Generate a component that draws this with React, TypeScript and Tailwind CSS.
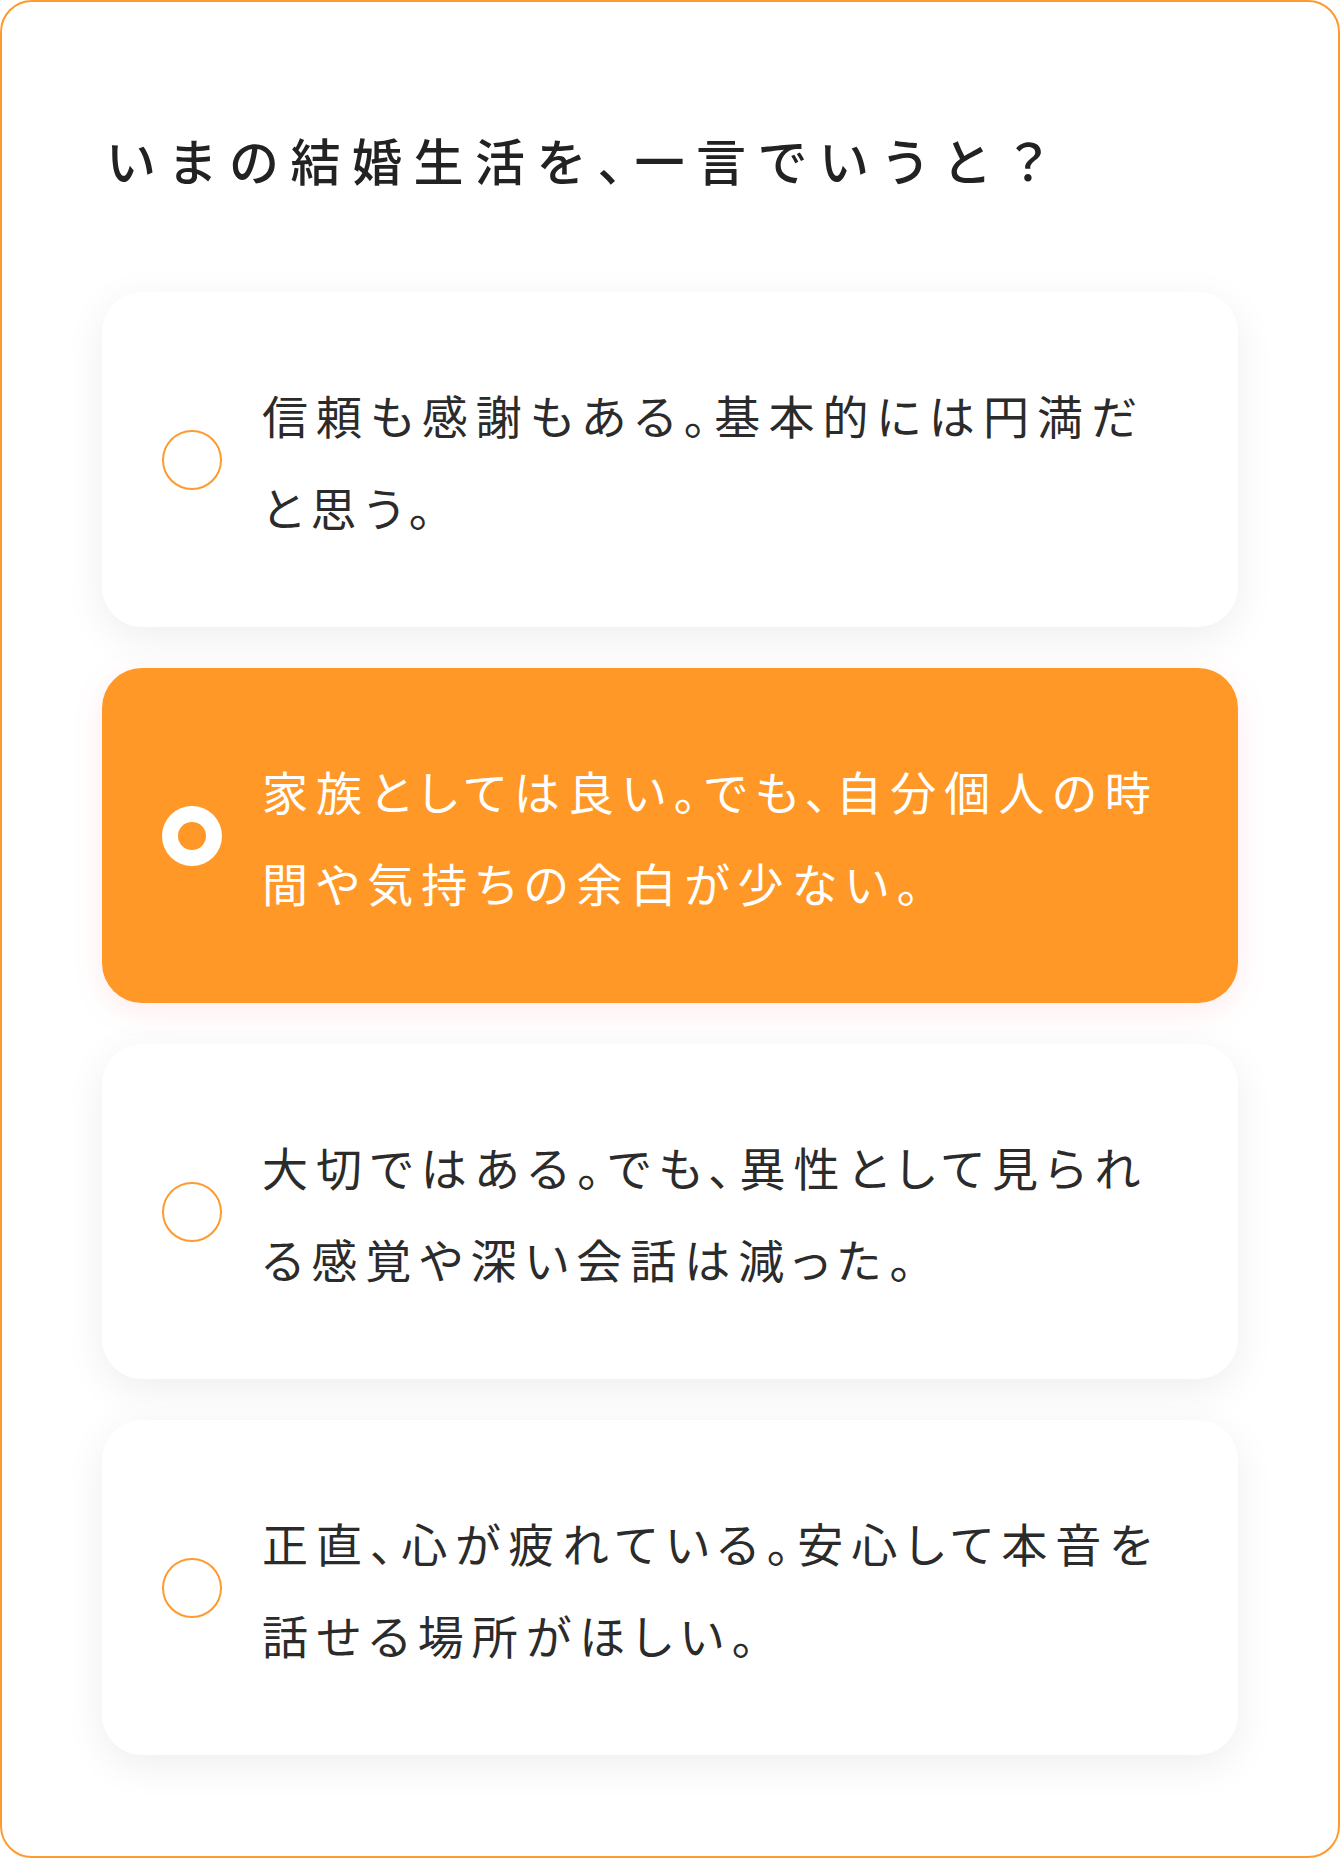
import { useState } from "react";

const OPTIONS = [
  "信頼も感謝もある。基本的には円満だと思う。",
  "家族としては良い。でも、自分個人の時間や気持ちの余白が少ない。",
  "大切ではある。でも、異性として見られる感覚や深い会話は減った。",
  "正直、心が疲れている。安心して本音を話せる場所がほしい。",
];

const FONT = "font-['Noto_Sans_CJK_JP','Noto_Sans',sans-serif]";

function Radio({ checked }: { checked: boolean }) {
  return checked ? (
    <span className="flex h-[60px] w-[60px] shrink-0 items-center justify-center rounded-full bg-white">
      <span className="h-[28px] w-[28px] rounded-full bg-[#FF9826]" />
    </span>
  ) : (
    <span className="h-[60px] w-[60px] shrink-0 rounded-full border-2 border-[#FF9A2E] bg-white" />
  );
}

export default function App() {
  const [selected, setSelected] = useState(1);

  return (
    <div className={`${FONT} bg-white`}>
      <div className="box-border flex h-[1858px] w-[1340px] flex-col rounded-[32px] border-2 border-[#FF9A2E] bg-white px-[100px] pt-[118px]">
        <h1 className="ml-[4px] text-[50px] font-medium leading-[78px] tracking-[0.23em] text-[#222]">
          いまの結婚生活を
          {/* half-width comma */}
          <span className="[font-feature-settings:'palt']">、</span>
          一言でいうと？
        </h1>

        <div className="mt-[94px] flex flex-col gap-[41px]">
          {OPTIONS.map((text, i) => {
            const active = selected === i;
            return (
              <button
                key={i}
                onClick={() => setSelected(i)}
                className={`flex h-[335px] w-full items-center rounded-[40px] pl-[60px] pr-[62px] text-left ${
                  active
                    ? "bg-[#FF9826] shadow-[0_8px_30px_rgba(255,110,120,0.14)]"
                    : "bg-white shadow-[0_10px_40px_rgba(0,0,0,0.07)]"
                }`}
              >
                <Radio checked={active} />
                <p
                  className={`ml-[40px] text-[46px] leading-[92px] tracking-[0.175em] [font-feature-settings:'palt'] ${
                    active ? "text-white" : "text-[#2b2b2b]"
                  }`}
                >
                  {text}
                </p>
              </button>
            );
          })}
        </div>
      </div>
    </div>
  );
}
